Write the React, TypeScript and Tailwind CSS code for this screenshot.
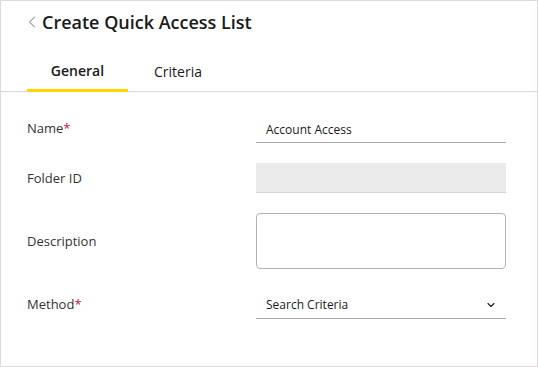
import { ChevronLeft, ChevronDown } from "lucide-react";

function Label({ text, required }: { text: string; required?: boolean }) {
  return (
    <div className="w-[229px] pt-[1px] text-[13px] text-[#333333]">
      {text}
      {required && <span className="text-[#d0103a]">*</span>}
    </div>
  );
}

export default function App() {
  return (
    <div
      className="w-[538px] h-[367px] border border-[#e3d8d8] bg-white"
      style={{ fontFamily: '"Open Sans", sans-serif' }}
    >
      {/* Header */}
      <div className="flex h-[41px] items-center pl-[21px] pt-[1px]">
        <ChevronLeft className="h-[20px] w-[20px] text-[#8c8c8c]" strokeWidth={1.25} />
        <h1 className="ml-[0px] text-[18px] font-semibold text-[#1a1a1a]">Create Quick Access List</h1>
      </div>

      {/* Tabs */}
      <div className="mt-[10px] flex h-[40px] border-b border-[#d9d9d9] pl-[26px]">
        <div className="-mb-px flex h-[40px] w-[101px] items-center justify-center border-b-[3px] border-[#ffd600] text-[14px] font-semibold text-[#1a1a1a]">
          General
        </div>
        <div className="flex h-[39px] w-[100px] items-center justify-center text-[14px] text-[#1a1a1a]">
          Criteria
        </div>
      </div>

      {/* Form */}
      <div className="flex flex-col gap-[20px] pl-[26px] pt-[21px]">
        <div className="flex h-[30px] items-center">
          <Label text="Name" required />
          <div className="flex h-[30px] w-[250px] items-center border-b border-[#a6a6a6] pl-[10px] pt-[4px] text-[12px] text-[#1a1a1a]">
            Account Access
          </div>
        </div>

        <div className="flex h-[30px] items-center">
          <Label text="Folder ID" />
          <div className="h-[30px] w-[250px] border-b border-[#d6d6d6] bg-[#ebebeb]" />
        </div>

        <div className="flex h-[56px] items-center">
          <Label text="Description" />
          <div className="h-[56px] w-[250px] rounded-[4px] border border-[#b3b3b3]" />
        </div>

        <div className="flex h-[30px] items-center">
          <Label text="Method" required />
          <div className="flex h-[30px] w-[250px] items-center justify-between border-b border-[#a6a6a6] pl-[10px] pr-[9px] pt-[3px] text-[12px] text-[#1a1a1a]">
            <span>Search Criteria</span>
            <ChevronDown className="h-[12px] w-[12px] text-[#1a1a1a]" strokeWidth={2.25} />
          </div>
        </div>
      </div>
    </div>
  );
}
